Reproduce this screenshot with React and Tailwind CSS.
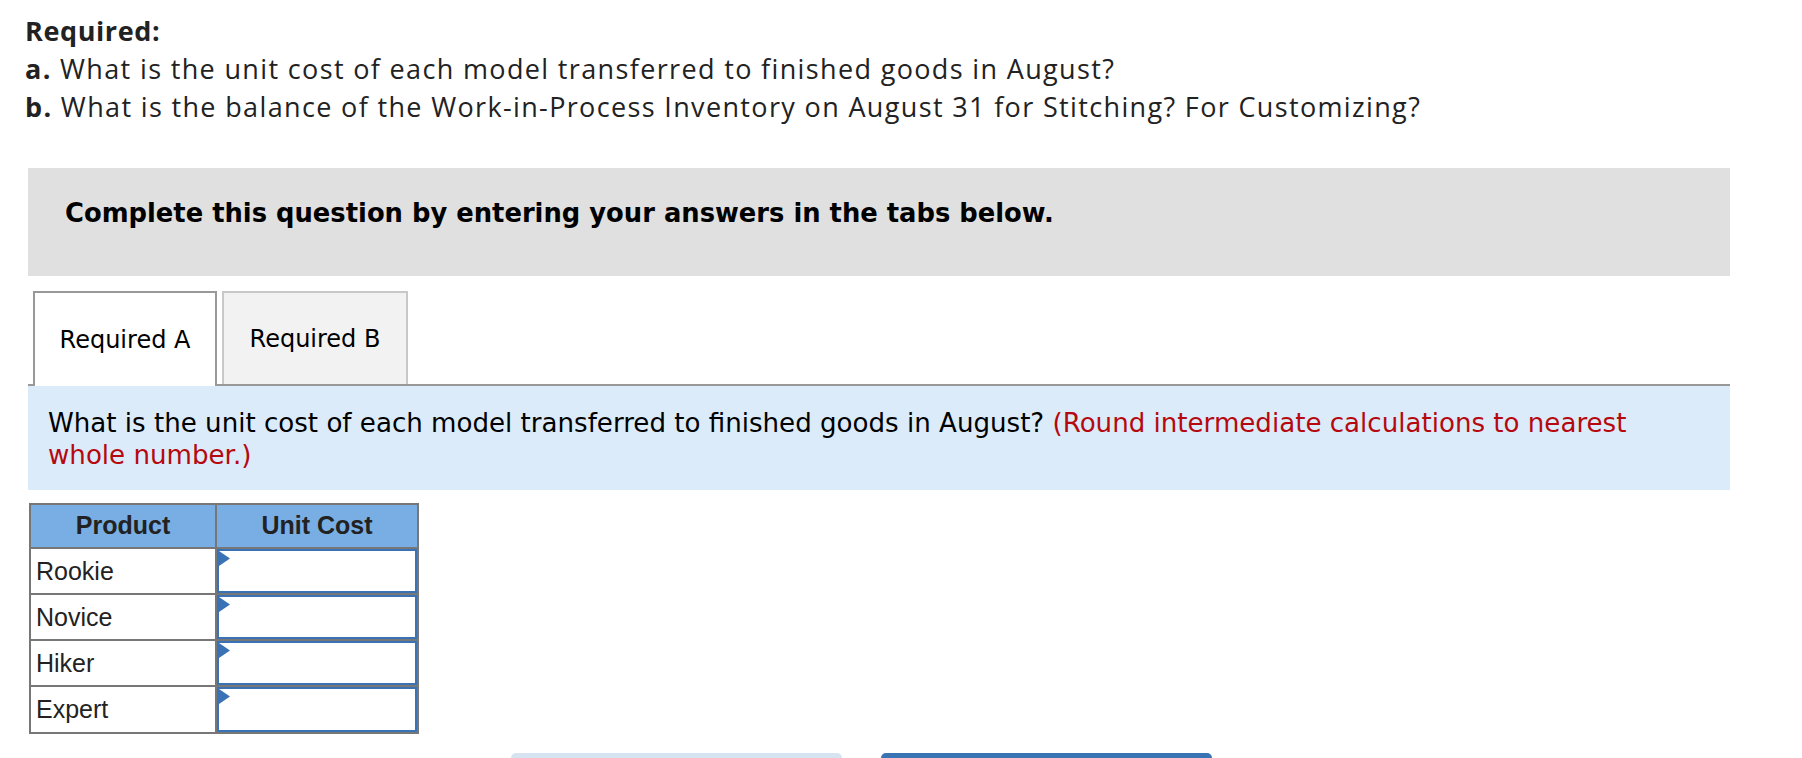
import React from 'react';

const rows = ['Rookie', 'Novice', 'Hiker', 'Expert'];

function AnswerCell() {
  return (
    <div className="relative h-full w-full border-2 border-[#3a72b6] bg-white">
      <svg className="absolute left-0 top-0" width="11" height="15" viewBox="0 0 11 15">
        <path d="M0 0 L11 7.5 L0 15 Z" fill="#3a72b6" />
      </svg>
    </div>
  );
}

export default function App() {
  return (
    <div className="min-h-screen bg-white pt-[12px] pb-[40px]">
      <div className="ml-[25px] font-['Open_Sans',sans-serif] text-[27px] leading-[38px] tracking-[1.35px] text-[#222]">
        <p className="font-bold tracking-[0.6px]">Required:</p>
        <p><span className="font-bold">a.</span> What is the unit cost of each model transferred to finished goods in August?</p>
        <p><span className="font-bold">b.</span> What is the balance of the Work-in-Process Inventory on August 31 for Stitching? For Customizing?</p>
      </div>

      <div className="ml-[28px] w-[1702px] font-['DejaVu_Sans',Verdana,sans-serif]">
        <div className="mt-[42px] h-[108px] bg-[#e0e0e0] pl-[37px] pt-[30px]">
          <p className="text-[25.8px] font-bold leading-[30px] text-black">Complete this question by entering your answers in the tabs below.</p>
        </div>

        <div className="mt-[15px] flex items-end border-b-2 border-[#999] pl-[5px]">
          <div className="-mb-[2px] flex h-[95px] w-[184px] items-center justify-center border-2 border-b-0 border-[#999] bg-white text-[24px] text-black">
            Required A
          </div>
          <div className="ml-[5px] flex h-[93px] w-[186px] items-center justify-center border-2 border-b-0 border-[#c8c8c8] bg-[#f2f2f2] text-[24px] text-black">
            Required B
          </div>
        </div>

        <div className="bg-[#dcebf9] pl-[20px] pr-[80px] pt-[21px] pb-[19px] text-[26.1px] leading-[32px] text-black">
          What is the unit cost of each model transferred to finished goods in August?{' '}
          <span className="text-[#b5090f]">(Round intermediate calculations to nearest whole number.)</span>
        </div>

        <div className="ml-[1px] mt-[13px] w-[390px] border-2 border-[#777] font-['Liberation_Sans',Arial,sans-serif] text-[25px] text-[#222]">
          <div className="flex h-[44px] border-b-2 border-[#777] bg-[#78aee3] font-bold">
            <div className="flex w-[186px] items-center justify-center border-r-2 border-[#777]">Product</div>
            <div className="flex flex-1 items-center justify-center">Unit Cost</div>
          </div>
          {rows.map(function(r, i) {
            const last = i === rows.length - 1;
            return (
              <div key={r} className={last ? 'flex h-[45px]' : 'flex h-[46px] border-b-2 border-[#777]'}>
                <div className="flex w-[186px] items-center border-r-2 border-[#777] pl-[5px] pt-[1px]">{r}</div>
                <div className="flex-1"><AnswerCell /></div>
              </div>
            );
          })}
        </div>

        <div className="mt-[19px] flex gap-[39px] pl-[483px]">
          <div className="h-[40px] w-[331px] rounded-t-[5px] bg-[#d6e3f1]"></div>
          <div className="h-[40px] w-[331px] rounded-t-[5px] bg-[#3a73b4]"></div>
        </div>
      </div>
    </div>
  );
}
